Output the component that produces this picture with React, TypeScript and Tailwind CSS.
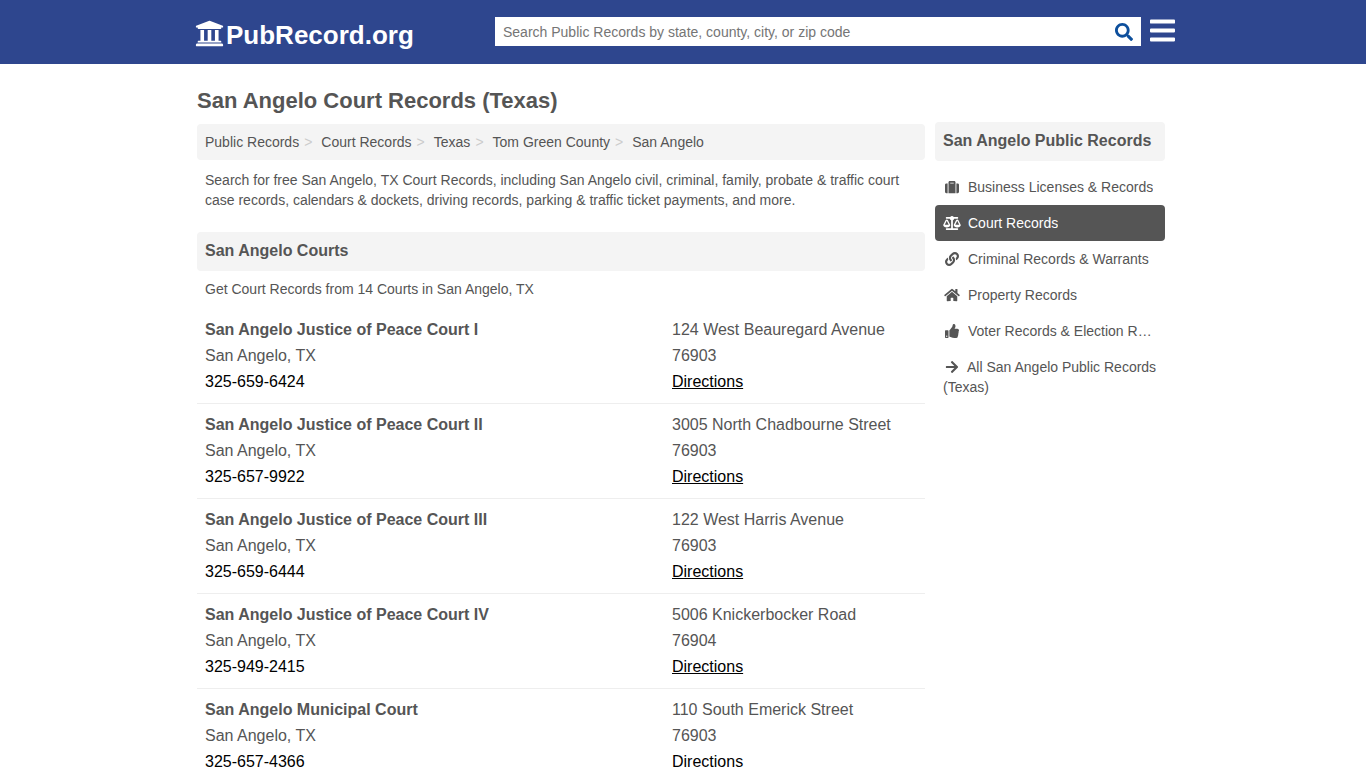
import { FaArrowRight, FaBalanceScale, FaBars, FaHome, FaLink, FaSearch, FaSuitcase, FaThumbsUp, FaUniversity } from 'react-icons/fa'
import type { IconType } from 'react-icons'
import clsx from 'clsx'

interface Court {
    name: string
    phone: string
    street: string
    zip: string
}

interface Category {
    label: string
    icon: IconType
    active?: boolean
}

const breadcrumbs = ['Public Records', 'Court Records', 'Texas', 'Tom Green County', 'San Angelo']

const courts: Court[] = [
    { name: 'San Angelo Justice of Peace Court I', phone: '325-659-6424', street: '124 West Beauregard Avenue', zip: '76903' },
    { name: 'San Angelo Justice of Peace Court II', phone: '325-657-9922', street: '3005 North Chadbourne Street', zip: '76903' },
    { name: 'San Angelo Justice of Peace Court III', phone: '325-659-6444', street: '122 West Harris Avenue', zip: '76903' },
    { name: 'San Angelo Justice of Peace Court IV', phone: '325-949-2415', street: '5006 Knickerbocker Road', zip: '76904' },
    { name: 'San Angelo Municipal Court', phone: '325-657-4366', street: '110 South Emerick Street', zip: '76903' },
]

const categories: Category[] = [
    { label: 'Business Licenses & Records', icon: FaSuitcase },
    { label: 'Court Records', icon: FaBalanceScale, active: true },
    { label: 'Criminal Records & Warrants', icon: FaLink },
    { label: 'Property Records', icon: FaHome },
    { label: 'Voter Records & Election R…', icon: FaThumbsUp },
]

function Header() {
    return (
        <header className="bg-[#2e468e]">
            <div className="mx-auto flex h-16 max-w-[984px] items-center pb-px pl-1">
                <a href="#" className="flex w-[300px] shrink-0 items-center gap-0.5 pt-[6px] text-[26px] font-bold leading-8 text-white">
                    <FaUniversity className="mb-0.5 h-[29px] w-[29px]" />
                    PubRecord.org
                </a>
                <form className="flex h-[29px] min-w-0 flex-1 items-center bg-white" onSubmit={(e) => e.preventDefault()}>
                    <input
                        type="text"
                        aria-label="Search Public Records"
                        placeholder="Search Public Records by state, county, city, or zip code"
                        className="h-full min-w-0 flex-1 px-2 text-sm text-[#555] outline-none placeholder:text-[#757575]"
                    />
                    <button type="submit" aria-label="Search" className="px-2 text-[#0d4f9c]">
                        <FaSearch className="h-[18px] w-[18px]" />
                    </button>
                </form>
                <button type="button" aria-label="Menu" className="ml-[9px] pb-0.5 text-white">
                    <FaBars className="h-[29px] w-[25px]" />
                </button>
            </div>
        </header>
    )
}

function Breadcrumbs() {
    return (
        <nav aria-label="Breadcrumb" className="rounded bg-[#f4f4f4] px-2 py-2">
            <ol className="flex flex-wrap text-sm">
                {breadcrumbs.map((crumb, i) => (
                    <li key={crumb}>
                        <a href="#">{crumb}</a>
                        {i < breadcrumbs.length - 1 && <span className="ml-[5px] mr-[9px] text-[#ccc]">&gt;</span>}
                    </li>
                ))}
            </ol>
        </nav>
    )
}

function CourtRow({ court }: { court: Court }) {
    return (
        <li className="flex border-b border-[#eee] px-2 py-2 text-base leading-[26px]">
            <div className="min-w-0 flex-1">
                <h3 className="font-bold">
                    <a href="#">{court.name}</a>
                </h3>
                <p>San Angelo, TX</p>
                <a href="#" className="text-black">{court.phone}</a>
            </div>
            <div className="w-[245px] shrink-0">
                <p>{court.street}</p>
                <p>{court.zip}</p>
                <a href="#" className="text-black underline">Directions</a>
            </div>
        </li>
    )
}

function Sidebar() {
    return (
        <aside className="w-[230px] shrink-0 pt-[58px]">
            <h2 className="rounded bg-[#f4f4f4] px-2 pb-[10px] pt-[9px] text-base font-bold leading-5">San Angelo Public Records</h2>
            <ul className="mt-2 text-sm">
                {categories.map(({ label, icon: Icon, active }) => (
                    <li key={label}>
                        <a href="#" className={clsx('flex items-center gap-[7px] rounded p-2', active && 'bg-[#555] text-white')}>
                            <Icon className="h-[14px] w-[18px] shrink-0" />
                            <span className="truncate">{label}</span>
                        </a>
                    </li>
                ))}
                <li>
                    <a href="#" className="block px-2 py-2">
                        <FaArrowRight className="mr-[6px] inline h-[14px] w-[18px] align-[-2px]" />
                        All San Angelo Public Records (Texas)
                    </a>
                </li>
            </ul>
        </aside>
    )
}

export default function App() {
    return (
        <div className="bg-white font-['Liberation_Sans',Arial,sans-serif] text-[#555]">
            <Header />
            <div className="mx-auto flex max-w-[980px] gap-[10px] pl-1 pr-2">
                <main className="min-w-0 flex-1 pt-[21px]">
                    <h1 className="mb-[7px] text-[22px] font-bold leading-8">San Angelo Court Records (Texas)</h1>
                    <Breadcrumbs />
                    <p className="px-2 pt-[10px] text-sm">
                        Search for free San Angelo, TX Court Records, including San Angelo civil, criminal, family, probate &amp; traffic court
                        case records, calendars &amp; dockets, driving records, parking &amp; traffic ticket payments, and more.
                    </p>
                    <h2 className="mt-[22px] rounded bg-[#f4f4f4] px-2 pb-[10px] pt-[9px] text-base font-bold leading-5">San Angelo Courts</h2>
                    <p className="px-2 pb-[10px] pt-2 text-sm">Get Court Records from 14 Courts in San Angelo, TX</p>
                    <ul>
                        {courts.map((court) => (
                            <CourtRow key={court.name} court={court} />
                        ))}
                    </ul>
                </main>
                <Sidebar />
            </div>
        </div>
    )
}
